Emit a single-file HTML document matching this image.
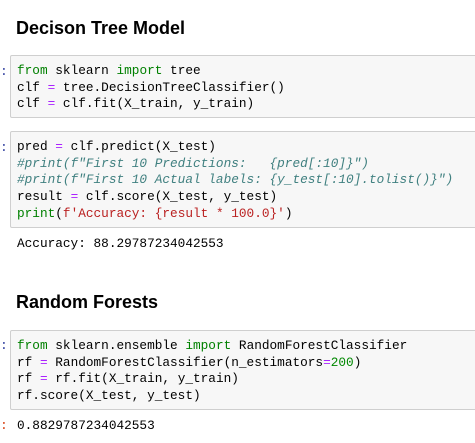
<!DOCTYPE html>
<html><head><style>
body{margin:0;width:475px;height:443px;background:#fff;position:relative;overflow:hidden;font-family:"Liberation Sans",sans-serif}
h2{position:absolute;left:16px;margin:0;font-size:18px;font-weight:bold;color:#000;line-height:20px}
.box{position:absolute;left:10px;width:480px;background:#f7f7f7;border:1px solid #cfcfcf;border-radius:2px;box-sizing:border-box}
pre,.out{margin:0;font-family:"Liberation Mono",monospace;font-size:12.75px;line-height:16.7px;color:#000}
pre{position:absolute;left:6px;top:7px}
.out{position:absolute;left:17px}
.p{position:absolute;left:0;font-family:"Liberation Mono",monospace;font-size:13px;color:#303f9f}
.k{color:#008000}.o{color:#aa22ff}.c{color:#408080;font-style:italic}.s{color:#ba2121}.n{color:#008800}
</style></head><body>
<h2 style="top:18px">Decison Tree Model</h2>
<span class="p" style="top:64px">:</span>
<div class="box" style="top:55px;height:63px"><pre><span class="k">from</span> sklearn <span class="k">import</span> tree
clf <span class="o">=</span> tree.DecisionTreeClassifier()
clf <span class="o">=</span> clf.fit(X_train, y_train)</pre></div>
<span class="p" style="top:140px">:</span>
<div class="box" style="top:131px;height:97px"><pre>pred <span class="o">=</span> clf.predict(X_test)
<span class="c">#print(f"First 10 Predictions:   {pred[:10]}")</span>
<span class="c">#print(f"First 10 Actual labels: {y_test[:10].tolist()}")</span>
result <span class="o">=</span> clf.score(X_test, y_test)
<span class="k">print</span>(<span class="s">f'Accuracy: {result * 100.0}'</span>)</pre></div>
<div class="out" style="top:236px">Accuracy: 88.29787234042553</div>
<h2 style="top:292px">Random Forests</h2>
<span class="p" style="top:338px">:</span>
<div class="box" style="top:330px;height:80px"><pre><span class="k">from</span> sklearn.ensemble <span class="k">import</span> RandomForestClassifier
rf <span class="o">=</span> RandomForestClassifier(n_estimators<span class="o">=</span><span class="n">200</span>)
rf <span class="o">=</span> rf.fit(X_train, y_train)
rf.score(X_test, y_test)</pre></div>
<span class="p" style="top:418px;color:#d84315">:</span>
<div class="out" style="top:418px">0.8829787234042553</div>
</body></html>
